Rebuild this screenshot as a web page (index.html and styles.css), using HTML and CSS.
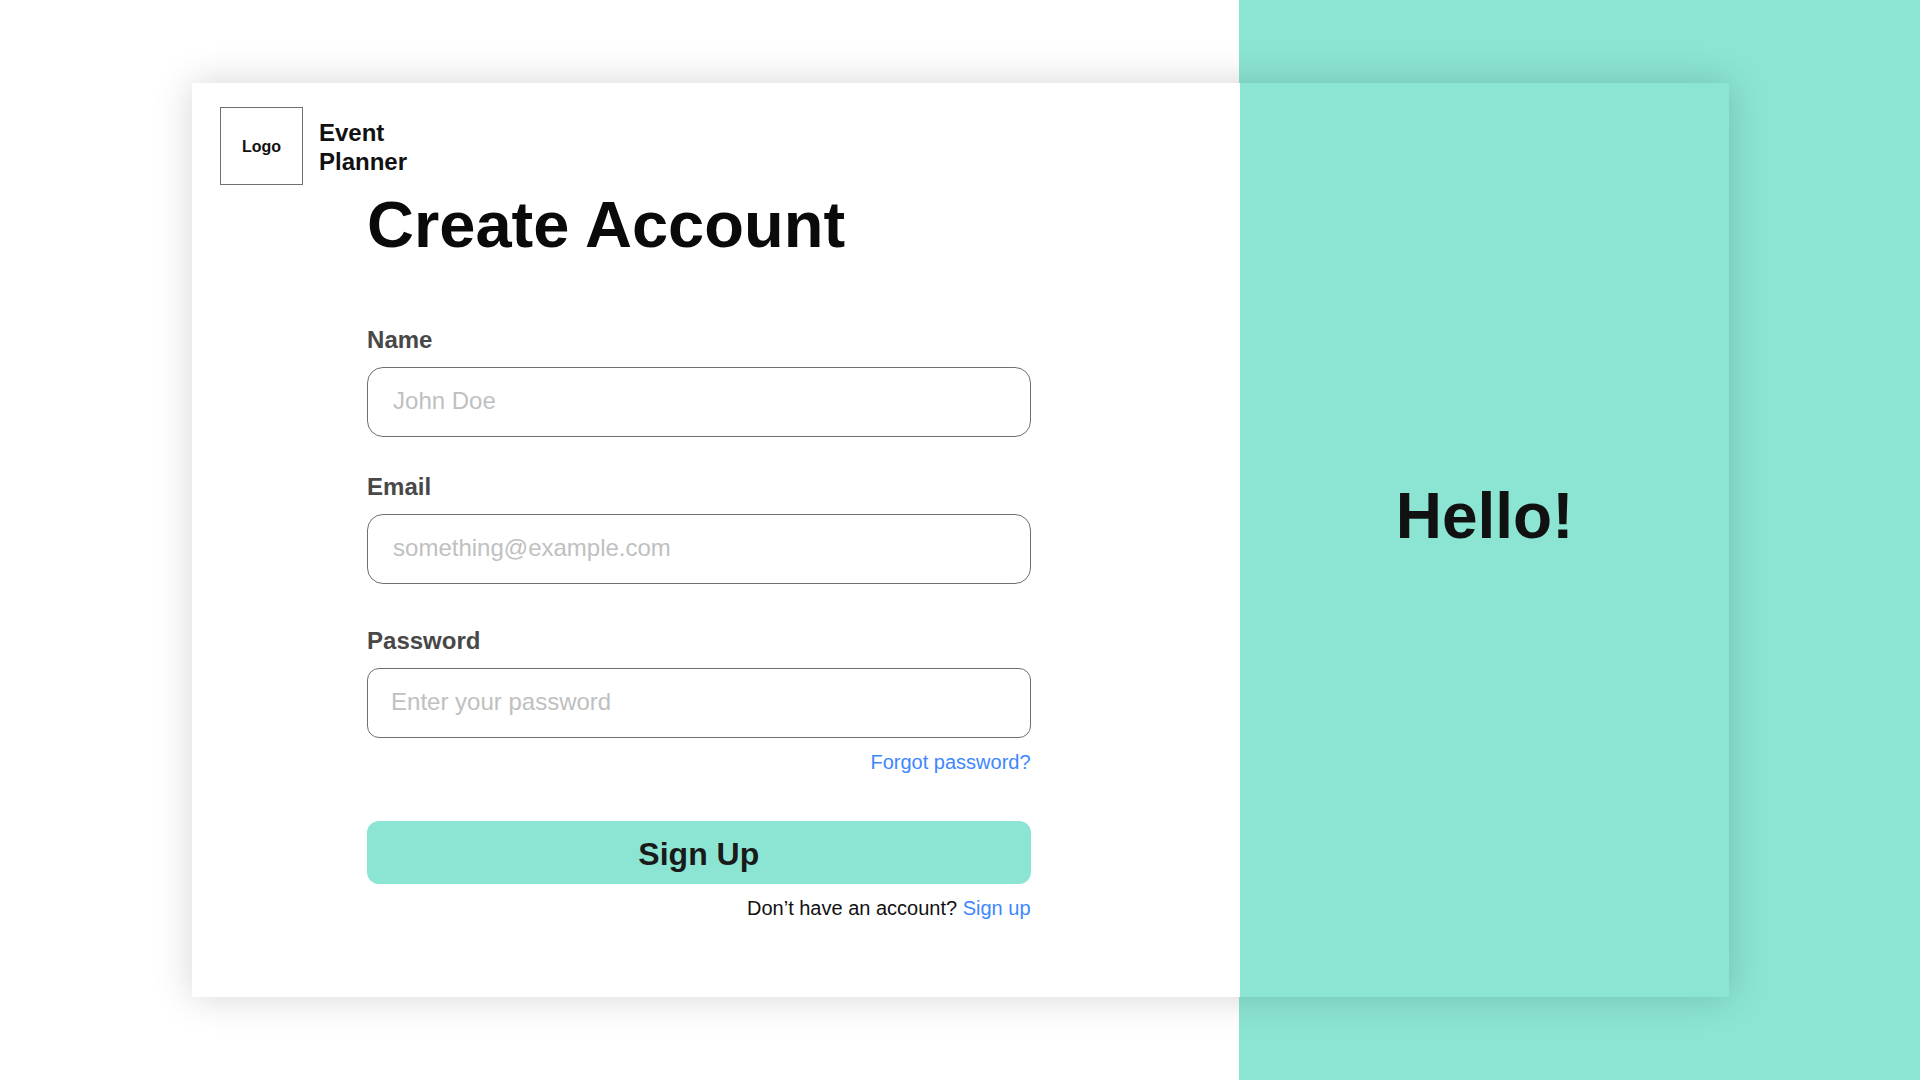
FILE: index.html
```html
<!DOCTYPE html>
<html lang="en">
<head>
  <meta charset="utf-8">
  <meta name="viewport" content="width=device-width, initial-scale=1">
  <title>Create Account – Event Planner</title>
  <link rel="stylesheet" href="styles.css">
</head>
<body>
  <main class="card">
    <section class="main-panel">
      <header class="brand">
        <div class="logo">Logo</div>
        <div class="brand-name">Event<br>Planner</div>
      </header>
      <form class="form">
        <h1 class="title">Create Account</h1>
        <div class="field">
          <label for="name">Name</label>
          <input id="name" type="text" placeholder="John Doe">
        </div>
        <div class="field">
          <label for="email">Email</label>
          <input id="email" type="email" placeholder="something@example.com">
        </div>
        <div class="field field-password">
          <label for="password">Password</label>
          <input id="password" type="password" placeholder="Enter your password">
        </div>
        <p class="note"><a href="#forgot">Forgot password?</a></p>
        <button class="submit" type="submit">Sign Up</button>
        <p class="note">Don’t have an account? <a href="#signup">Sign up</a></p>
      </form>
    </section>
    <aside class="side-panel">
      <h2 class="greeting">Hello!</h2>
    </aside>
  </main>
</body>
</html>
```

FILE: styles.css
```css
:root {
  --mint: #8be5d2;
  --link: #3d87ff;
  --line: #707070;
}

* {
  box-sizing: border-box;
}

body {
  margin: 0;
  min-height: 100vh;
  display: flex;
  align-items: center;
  font-family: "Liberation Sans", Arial, sans-serif;
  color: #111;
  background: linear-gradient(to right, #fff 64.53%, var(--mint) 64.53%);
}

.card {
  width: 80.05%;
  margin-left: 10%;
  display: grid;
  grid-template-columns: 68.2% 31.8%;
  box-shadow: 0 0 36px rgba(0, 0, 0, 0.17);
}

.main-panel {
  padding: 24px 0 77px;
  background: #fff;
}

.brand {
  display: flex;
  align-items: center;
  gap: 16px;
  margin-left: 28px;
}

.logo {
  width: 83px;
  height: 78px;
  display: flex;
  align-items: center;
  justify-content: center;
  padding-top: 2px;
  border: 1px solid var(--line);
  font-size: 16px;
  font-weight: bold;
}

.brand-name {
  padding-top: 2px;
  font-size: 24px;
  line-height: 29px;
  font-weight: bold;
}

.form {
  width: 63.3%;
  margin-left: 16.7%;
}

.title {
  margin: 4px 0 65px;
  font-size: 65px;
  line-height: 72px;
  color: #0a0a0a;
}

.field {
  display: flex;
  flex-direction: column;
  gap: 13px;
  margin-top: 36px;
}

.field-password {
  margin-top: 43px;
}

.field label {
  font-size: 24px;
  line-height: 28px;
  font-weight: bold;
  color: #484848;
}

.field input {
  width: 100%;
  height: 70px;
  padding: 0 25px 2px;
  border: 1px solid var(--line);
  border-radius: 16px;
  background: #fff;
  font: inherit;
  font-size: 24px;
  color: #111;
}

.field-password input {
  padding: 0 23px 2px;
  border-radius: 12px;
}

.field input::placeholder {
  color: #c0c0c0;
  opacity: 1;
}

.note {
  margin: 12px 0 0;
  font-size: 20px;
  line-height: 24px;
  text-align: right;
}

.note a {
  color: var(--link);
  text-decoration: none;
}

.submit {
  display: block;
  width: 100%;
  height: 63px;
  margin-top: 47px;
  padding: 3px 0 0;
  border: 0;
  border-radius: 12px;
  background: var(--mint);
  font: inherit;
  font-size: 32px;
  font-weight: bold;
  color: #1a1a1a;
}

.side-panel {
  display: flex;
  align-items: center;
  justify-content: center;
  padding-bottom: 48px;
  background: var(--mint);
}

.greeting {
  margin: 0;
  font-size: 64px;
  line-height: 72px;
}
```
